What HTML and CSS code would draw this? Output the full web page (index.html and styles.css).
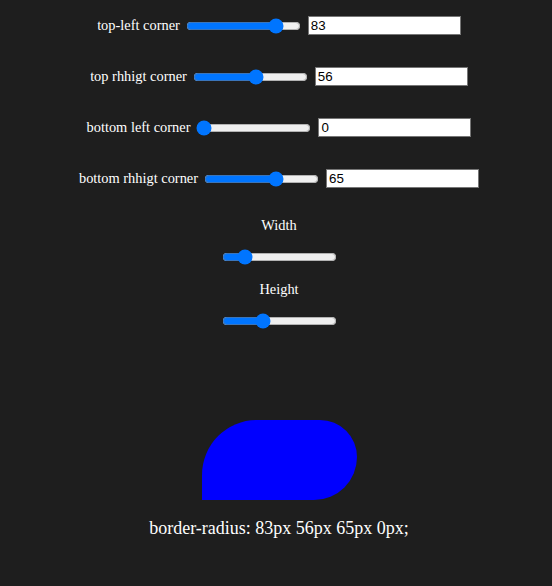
FILE: index.html
```html
<!DOCTYPE html>
<html>
<head>
<meta charset="utf-8">
<link rel="stylesheet" href="styles.css">
</head>
<body>
<div class="page">
  <div class="corners">
    <div class="row">
      <label class="label">top-left corner</label>
      <input class="range" type="range" min="0" max="100" value="83">
      <input class="num" type="text" value="83">
    </div>
    <div class="row">
      <label class="label">top rhhigt corner</label>
      <input class="range" type="range" min="0" max="100" value="56">
      <input class="num" type="text" value="56">
    </div>
    <div class="row">
      <label class="label">bottom left corner</label>
      <input class="range" type="range" min="0" max="100" value="0">
      <input class="num" type="text" value="0">
    </div>
    <div class="row">
      <label class="label">bottom rhhigt corner</label>
      <input class="range" type="range" min="0" max="100" value="65">
      <input class="num" type="text" value="65">
    </div>
  </div>
  <div class="size">
    <div class="size-label">Width</div>
    <input class="range" type="range" min="0" max="1000" value="155">
    <div class="size-label">Height</div>
    <input class="range" type="range" min="0" max="100" value="34">
  </div>
  <div class="shape"></div>
  <div class="code">border-radius: 83px 56px 65px 0px;</div>
</div>
</body>
</html>
```

FILE: styles.css
```css
html, body {
  margin: 0;
  padding: 0;
  background: #1e1e1e;
  color: #ffffff;
  font-family: "Liberation Serif", "Times New Roman", serif;
}

.page {
  display: flex;
  flex-direction: column;
  align-items: center;
  padding: 15px 0 0 6px;
}

.corners {
  display: flex;
  flex-direction: column;
  align-items: center;
  gap: 30px;
}

.row {
  display: flex;
  align-items: center;
  height: 21px;
}

.label {
  font-family: "Liberation Serif", "Times New Roman", serif;
  font-size: 14.4px;
  margin-right: 4px;
}

.range {
  width: 115px;
  height: 16px;
  margin: 0 2px;
  accent-color: #0075ff;
}

.num {
  box-sizing: border-box;
  width: 153px;
  height: 19px;
  margin-left: 5px;
  padding: 1px 2px;
  border: 1px solid #767676;
  border-radius: 0;
  background: #ffffff;
  color: #000000;
  font-family: "Liberation Sans", Arial, sans-serif;
  font-size: 13.33px;
}

.size {
  display: flex;
  flex-direction: column;
  align-items: center;
  margin-top: 28px;
}

.size-label {
  font-size: 14.4px;
  line-height: 17px;
  margin-bottom: 15px;
}

.size .range + .size-label {
  margin-top: 16px;
}

.shape {
  width: 155px;
  height: 80px;
  margin-top: 91px;
  background: #0000ff;
  border-radius: 83px 56px 65px 0px;
}

.code {
  margin-top: 18px;
  font-size: 18px;
  line-height: 21px;
}
```
